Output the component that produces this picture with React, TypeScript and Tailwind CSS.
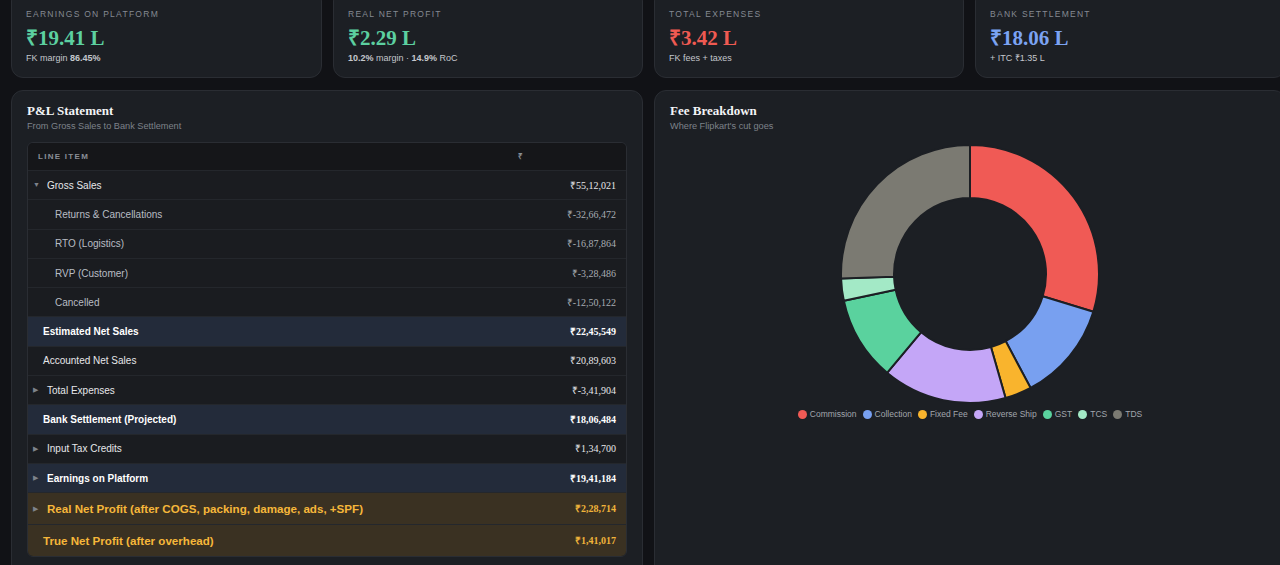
import React from 'react';

type Row = {
  label: string;
  value: string;
  kind: 'top' | 'child' | 'plain' | 'hl' | 'gold';
  caret?: 'down' | 'right';
};

const rows: Row[] = [
  { label: 'Gross Sales', value: '₹55,12,021', kind: 'top', caret: 'down' },
  { label: 'Returns & Cancellations', value: '₹-32,66,472', kind: 'child' },
  { label: 'RTO (Logistics)', value: '₹-16,87,864', kind: 'child' },
  { label: 'RVP (Customer)', value: '₹-3,28,486', kind: 'child' },
  { label: 'Cancelled', value: '₹-12,50,122', kind: 'child' },
  { label: 'Estimated Net Sales', value: '₹22,45,549', kind: 'hl' },
  { label: 'Accounted Net Sales', value: '₹20,89,603', kind: 'plain' },
  { label: 'Total Expenses', value: '₹-3,41,904', kind: 'top', caret: 'right' },
  { label: 'Bank Settlement (Projected)', value: '₹18,06,484', kind: 'hl' },
  { label: 'Input Tax Credits', value: '₹1,34,700', kind: 'top', caret: 'right' },
  { label: 'Earnings on Platform', value: '₹19,41,184', kind: 'hl', caret: 'right' },
  { label: 'Real Net Profit (after COGS, packing, damage, ads, +SPF)', value: '₹2,28,714', kind: 'gold', caret: 'right' },
  { label: 'True Net Profit (after overhead)', value: '₹1,41,017', kind: 'gold' },
];

const slices = [
  { name: 'Commission', from: 0, to: 107, color: '#f05a55' },
  { name: 'Collection', from: 107, to: 152, color: '#78a0f0' },
  { name: 'Fixed Fee', from: 152, to: 164, color: '#f9b42d' },
  { name: 'Reverse Ship', from: 164, to: 220, color: '#c4a6f7' },
  { name: 'GST', from: 220, to: 258, color: '#5ad29e' },
  { name: 'TCS', from: 258, to: 268, color: '#a3e9c6' },
  { name: 'TDS', from: 268, to: 360, color: '#7b7a72' },
];

const pt = (cx: number, cy: number, r: number, deg: number) => {
  const a = ((deg - 90) * Math.PI) / 180;
  return [cx + r * Math.cos(a), cy + r * Math.sin(a)];
};

const arc = (from: number, to: number) => {
  const cx = 131, cy = 131, ro = 129, ri = 76;
  const large = to - from > 180 ? 1 : 0;
  const [x1, y1] = pt(cx, cy, ro, from);
  const [x2, y2] = pt(cx, cy, ro, to);
  const [x3, y3] = pt(cx, cy, ri, to);
  const [x4, y4] = pt(cx, cy, ri, from);
  return `M${x1} ${y1} A${ro} ${ro} 0 ${large} 1 ${x2} ${y2} L${x3} ${y3} A${ri} ${ri} 0 ${large} 0 ${x4} ${y4} Z`;
};

const KpiCard: React.FC<{ label: string; value: string; color: string; children: React.ReactNode }> = ({ label, value, color, children }) => (
  <div className="h-[89px] -mt-[11px] rounded-xl border border-[#2a2d33] bg-[#1c1f24] px-[14px] pt-[19px]">
    <div className="text-[8.5px] leading-[11px] tracking-[0.15em] text-[#858a92] uppercase">{label}</div>
    <div className={`mt-[6px] text-[21px] leading-[24px] font-bold ${color}`} style={{ fontFamily: '"Liberation Serif", serif' }}>{value}</div>
    <div className="mt-[2px] text-[9px] leading-[13px] text-[#c4c7cc]">{children}</div>
  </div>
);

const App: React.FC = () => {
  return (
    <div className="w-[1280px] h-[565px] overflow-hidden bg-[#111216]" style={{ fontFamily: '"Liberation Sans", Arial, sans-serif' }}>
      <div className="w-[1300px] pl-[11px]">
        {/* KPI cards */}
        <div className="grid grid-cols-[311px_310px_310px_311px] gap-[11px]">
          <KpiCard label="Earnings on Platform" value="₹19.41 L" color="text-[#5cd0a0]">
            FK margin <b>86.45%</b>
          </KpiCard>
          <KpiCard label="Real Net Profit" value="₹2.29 L" color="text-[#5cd0a0]">
            <b>10.2%</b> margin · <b>14.9%</b> RoC
          </KpiCard>
          <KpiCard label="Total Expenses" value="₹3.42 L" color="text-[#ef5a52]">
            FK fees + taxes
          </KpiCard>
          <KpiCard label="Bank Settlement" value="₹18.06 L" color="text-[#7ba3f3]">
            + ITC ₹1.35 L
          </KpiCard>
        </div>

        <div className="mt-[12px] grid grid-cols-[632px_632px] gap-[11px]">
          {/* P&L Statement */}
          <div className="h-[500px] rounded-xl border border-[#2a2d33] bg-[#1c1f24] px-[15px] pt-[12px]">
            <div className="text-[13px] leading-[16px] font-bold text-[#f3f4f6]" style={{ fontFamily: '"Liberation Serif", serif' }}>P&amp;L Statement</div>
            <div className="mt-[1px] text-[9.2px] leading-[13px] text-[#7d828a]">From Gross Sales to Bank Settlement</div>
            <div className="mt-[9px] overflow-hidden rounded-md border border-[#2a2d33] bg-[#1a1c20]">
              <div className="grid h-[27px] grid-cols-[1fr_112px] items-center bg-[#151619] text-[8px] font-bold tracking-[0.16em] text-[#8a8f97]">
                <div className="pl-[10px]">LINE ITEM</div>
                <div className="pl-[4px]" style={{ fontFamily: '"Liberation Serif", serif' }}>₹</div>
              </div>
              {rows.map((r) => {
                const bg =
                  r.kind === 'hl' ? 'bg-[#232b3a]' : r.kind === 'gold' ? 'bg-[#3a3122]' : 'bg-[#1a1c20]';
                const h = r.kind === 'gold' ? 'h-[32px]' : 'h-[29.3px]';
                const labelCls =
                  r.kind === 'child'
                    ? 'pl-[27px] text-[10px] text-[#b9bdc4]'
                    : r.kind === 'hl'
                    ? 'text-[10px] font-bold text-white'
                    : r.kind === 'gold'
                    ? 'text-[11.6px] font-bold text-[#f6b73a]'
                    : 'text-[10px] text-[#e6e7ea]';
                const valCls =
                  r.kind === 'child'
                    ? 'text-[#a8acb3]'
                    : r.kind === 'hl'
                    ? 'font-bold text-white'
                    : r.kind === 'gold'
                    ? 'font-bold text-[#f0b43a]'
                    : 'text-[#e6e7ea]';
                return (
                  <div key={r.label} className={`grid grid-cols-[1fr_140px] items-center border-t border-[#24272c] ${bg} ${h}`}>
                    <div className={`flex items-center ${labelCls}`}>
                      {r.caret ? (
                        <>
                          <span className="w-[19px] pl-[5px] text-[7px] text-[#7e838b] font-normal">{r.caret === 'down' ? '▼' : '▶'}</span>
                          <span>{r.label}</span>
                        </>
                      ) : (
                        <span className={r.kind === 'child' ? '' : 'pl-[15px]'}>{r.label}</span>
                      )}
                    </div>
                    <div className={`pr-[10px] text-right text-[10px] ${valCls}`} style={{ fontFamily: '"Liberation Serif", serif' }}>{r.value}</div>
                  </div>
                );
              })}
            </div>
          </div>

          {/* Fee Breakdown */}
          <div className="h-[500px] rounded-xl border border-[#2a2d33] bg-[#1c1f24] px-[15px] pt-[12px]">
            <div className="text-[13px] leading-[16px] font-bold text-[#f3f4f6]" style={{ fontFamily: '"Liberation Serif", serif' }}>Fee Breakdown</div>
            <div className="mt-[1px] text-[9.2px] leading-[13px] text-[#7d828a]">Where Flipkart's cut goes</div>
            <div className="mt-[10px] flex flex-col items-center">
              <svg width="262" height="262" viewBox="0 0 262 262">
                {slices.map((s) => (
                  <path key={s.name} d={arc(s.from, s.to)} fill={s.color} stroke="#1c1f24" strokeWidth="2" />
                ))}
              </svg>
              <div className="mt-[3px] flex items-center gap-[6px] text-[8.5px] text-[#a2a6ad]">
                {slices.map((s) => (
                  <div key={s.name} className="flex items-center gap-[3px]">
                    <span className="inline-block h-[9px] w-[9px] rounded-full" style={{ backgroundColor: s.color }} />
                    <span>{s.name}</span>
                  </div>
                ))}
              </div>
            </div>
          </div>
        </div>
      </div>
    </div>
  );
};

export default App;
